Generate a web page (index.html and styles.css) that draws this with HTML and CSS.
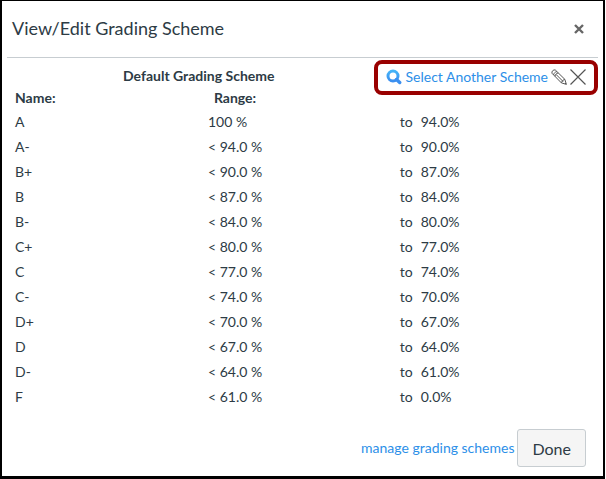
FILE: index.html
```html
<!DOCTYPE html>
<html lang="en">
<head>
    <meta charset="UTF-8">
    <meta name="viewport" content="width=device-width, initial-scale=1.0">
    <title>View/Edit Grading Scheme</title>
    <link rel="stylesheet" href="styles.css">
</head>
<body>
<div class="dialog" role="dialog" aria-labelledby="dialog-title">
    <div class="dialog-header">
        <h1 id="dialog-title">View/Edit Grading Scheme</h1>
        <button type="button" class="close-button" aria-label="Close">
            <svg width="10" height="10" viewBox="0 0 10 10"><path d="M1 1l8 8M9 1l-8 8" stroke="#666" stroke-width="2.4"/></svg>
        </button>
    </div>

    <div class="scheme-header">
        <h2>Default Grading Scheme</h2>
        <div class="scheme-links">
            <a href="#" class="find-link">
                <svg width="16" height="16" viewBox="0 0 16 16" fill="none">
                    <defs>
                        <linearGradient id="lens" x1="0" y1="0" x2="0" y2="1">
                            <stop offset="0" stop-color="#45b4f8"/>
                            <stop offset="1" stop-color="#3b8ff0"/>
                        </linearGradient>
                    </defs>
                    <circle cx="7" cy="7" r="5" stroke="url(#lens)" stroke-width="3"/>
                    <path d="M10.5 10.5l3.2 3" stroke="#3b8ff0" stroke-width="3.4" stroke-linecap="round"/>
                </svg>
                Select Another Scheme
            </a>
            <a href="#" class="icon-link" aria-label="Edit grading scheme">
                <svg width="16" height="16" viewBox="0 0 16 16" fill="none" stroke="#555" stroke-width="1" stroke-linejoin="round">
                    <path d="M1 4.3C.2 2.6 2.6.2 4.3 1L13.8 10.3 15.4 15.4 10.3 13.8z"/>
                    <path d="M2.6 5.9c.2-1.7 1.6-3.1 3.3-3.3M4 7.3c.2-1.7 1.6-3.1 3.3-3.3M5.3 5.7l6.6 6.6M10.3 13.8c0-1 .4-1.5 1.6-1.5 0-1.2.7-2 1.9-2M14 15l1-1"/>
                </svg>
            </a>
            <a href="#" class="icon-link" aria-label="Remove grading scheme">
                <svg width="16" height="16" viewBox="0 0 16 16"><path d="M.5.5l15 15M15.5.5l-15 15" stroke="#555" stroke-width="1.2"/></svg>
            </a>
        </div>
    </div>

    <table class="grading-table">
        <thead>
            <tr><th class="name">Name:</th><th class="range">Range:</th><th class="to"></th><th class="min"></th></tr>
        </thead>
        <tbody>
            <tr><td>A</td><td>100 %</td><td>to</td><td>94.0%</td></tr>
            <tr><td>A-</td><td>&lt; 94.0 %</td><td>to</td><td>90.0%</td></tr>
            <tr><td>B+</td><td>&lt; 90.0 %</td><td>to</td><td>87.0%</td></tr>
            <tr><td>B</td><td>&lt; 87.0 %</td><td>to</td><td>84.0%</td></tr>
            <tr><td>B-</td><td>&lt; 84.0 %</td><td>to</td><td>80.0%</td></tr>
            <tr><td>C+</td><td>&lt; 80.0 %</td><td>to</td><td>77.0%</td></tr>
            <tr><td>C</td><td>&lt; 77.0 %</td><td>to</td><td>74.0%</td></tr>
            <tr><td>C-</td><td>&lt; 74.0 %</td><td>to</td><td>70.0%</td></tr>
            <tr><td>D+</td><td>&lt; 70.0 %</td><td>to</td><td>67.0%</td></tr>
            <tr><td>D</td><td>&lt; 67.0 %</td><td>to</td><td>64.0%</td></tr>
            <tr><td>D-</td><td>&lt; 64.0 %</td><td>to</td><td>61.0%</td></tr>
            <tr><td>F</td><td>&lt; 61.0 %</td><td>to</td><td>0.0%</td></tr>
        </tbody>
    </table>

    <div class="dialog-footer">
        <a href="#">manage grading schemes</a>
        <button type="button" class="done-button">Done</button>
    </div>
</div>
</body>
</html>
```
FILE: styles.css
```css
* {
    box-sizing: border-box;
}

body {
    margin: 0;
    padding-right: 1px;
    font-family: Lato, sans-serif;
    font-size: 14px;
    line-height: 20px;
    color: #2d3b45;
    background: #fff;
}

.dialog {
    display: flex;
    flex-direction: column;
    min-height: 100vh;
    padding: 0 5px;
    border: solid #000;
    border-width: 1px 2px 3px;
    background: #fff;
}

.dialog-header {
    display: flex;
    justify-content: space-between;
    align-items: center;
    height: 57px;
    padding: 0 10px 0 5px;
    border-bottom: 1px solid #c7cdd1;
}

.dialog-header h1 {
    margin: 0;
    padding-bottom: 3px;
    font-size: 18px;
    font-weight: 400;
}

.close-button {
    display: flex;
    padding: 4px;
    border: 0;
    background: none;
    cursor: pointer;
}

a {
    color: #2d8fe8;
    text-decoration: none;
}

.scheme-header {
    display: flex;
    justify-content: space-between;
    align-items: center;
    margin-top: 2px;
}

.scheme-header h2 {
    margin: 0;
    padding: 0 0 4px 116px;
    font-size: 14px;
    font-weight: 700;
}

/* highlighted group of scheme actions */
.scheme-links {
    display: flex;
    align-items: center;
    gap: 3px;
    height: 35px;
    padding: 0 8px 2px;
    border: 4px solid #900;
    border-radius: 8px;
}

.find-link {
    display: flex;
    align-items: center;
    gap: 4px;
}

.icon-link {
    display: flex;
}

.grading-table {
    width: 100%;
    margin-top: -4px;
    table-layout: fixed;
    border-collapse: collapse;
}

.grading-table th,
.grading-table td {
    height: 25px;
    padding: 0;
    text-align: left;
}

.grading-table th {
    height: 18px;
    line-height: 14px;
    vertical-align: top;
}

.grading-table th:first-child,
.grading-table td:first-child {
    padding-left: 8px;
}

.grading-table .name {
    width: 34%;
}

.grading-table .range {
    padding-left: 6px;
}

.grading-table .to {
    width: 21px;
}

.grading-table .min {
    width: 30%;
}

.dialog-footer {
    display: flex;
    justify-content: flex-end;
    align-items: center;
    gap: 3px;
    margin-top: auto;
    padding: 0 12px 9px 0;
}

.done-button {
    height: 38px;
    padding: 0 14px;
    font-family: inherit;
    font-size: 16px;
    color: #2d3b45;
    background: #f5f5f5;
    border: 1px solid #c7cdd1;
    border-radius: 3px;
    cursor: pointer;
}
```
